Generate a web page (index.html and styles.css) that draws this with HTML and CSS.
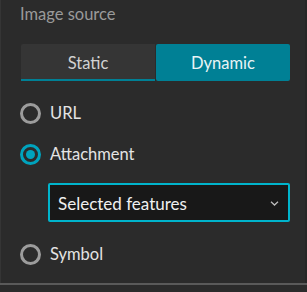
FILE: index.html
```html
<!DOCTYPE html>
<html>
<head>
<meta charset="utf-8">
<link rel="stylesheet" href="styles.css">
</head>
<body>
<div class="panel">
  <div class="label">Image source</div>
  <div class="segmented">
    <button class="seg seg-off">Static</button>
    <button class="seg seg-on">Dynamic</button>
  </div>
  <div class="options">
    <div class="radio-row">
      <span class="radio"></span><span class="radio-text">URL</span>
    </div>
    <div class="radio-row">
      <span class="radio checked"></span><span class="radio-text">Attachment</span>
    </div>
    <div class="select">
      <span class="select-text">Selected features</span>
      <svg class="chev" width="9" height="5" viewBox="0 0 9 5"><path d="M1 0.8 L4.5 4 L8 0.8" fill="none" stroke="#bbb" stroke-width="1.3"/></svg>
    </div>
    <div class="radio-row">
      <span class="radio"></span><span class="radio-text">Symbol</span>
    </div>
  </div>
</div>
<div class="footer"></div>
</body>
</html>
```
FILE: styles.css
```css
html, body {
  margin: 0;
  padding: 0;
  background: #2b2b2b;
  width: 307px;
  height: 292px;
  overflow: hidden;
  font-family: Lato, "Open Sans", sans-serif;
}
.panel {
  height: 283px;
  box-sizing: border-box;
  padding: 4px 15px 0 20px;
  border-left: 1px solid #353535;
  border-right: 2px solid #262626;
}
.label {
  color: #9a9a9a;
  font-size: 16.5px;
  line-height: 21px;
  margin-left: -1px;
}
.segmented {
  display: flex;
  gap: 1px;
  margin-top: 19px;
  height: 37px;
}
.seg {
  flex: 1;
  border: none;
  font-family: inherit;
  font-size: 16.5px;
  padding: 0;
  border-radius: 2px;
}
.seg-off {
  background: #353535;
  color: #d2d2d2;
  box-shadow: inset 0 -2px 0 #008095;
  border-radius: 2px 0 0 0;
}
.seg-on {
  background: #008095;
  color: #e8f4f6;
}
.options {
  display: flex;
  flex-direction: column;
  margin-top: 22px;
}
.radio-row {
  display: flex;
  align-items: center;
  gap: 9px;
  height: 20px;
  margin-bottom: 21px;
  margin-left: -1px;
}
.radio {
  width: 15px;
  height: 15px;
  border: 3px solid #9c9c9c;
  border-radius: 50%;
  box-sizing: content-box;
  flex: none;
}
.radio.checked {
  border-color: #00a3bd;
  background: #2b2b2b;
  position: relative;
}
.radio.checked::after {
  content: "";
  position: absolute;
  left: 3px;
  top: 3px;
  width: 9px;
  height: 9px;
  border-radius: 50%;
  background: #00a3bd;
}
.radio-text {
  color: #e4e4e4;
  font-size: 16.5px;
}
.select {
  display: flex;
  align-items: center;
  justify-content: space-between;
  margin-left: 27px;
  height: 39px;
  box-sizing: border-box;
  border: 2px solid #00b4cc;
  border-radius: 2px;
  background: #181818;
  padding: 2px 9px 0 8px;
  margin-top: -2px;
  margin-bottom: 22px;
}
.select-text {
  color: #f0f0f0;
  font-size: 17px;
}
.footer {
  height: 2px;
  background: #5a5a5a;
}
```
